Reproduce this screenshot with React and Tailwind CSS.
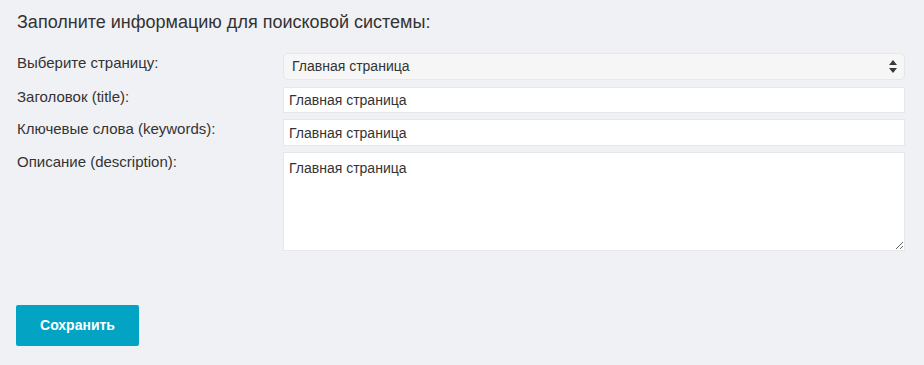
import { useState } from "react";

const PAGES = ["Главная страница", "О компании", "Контакты"];

const Row = ({ label, children }) => (
  <div className="grid grid-cols-[266px_622px] items-start">
    <label className="text-[15px] leading-[18px] text-[#333] pt-[1px]">{label}</label>
    {children}
  </div>
);

const App = () => {
  const [page, setPage] = useState(PAGES[0]);
  const [title, setTitle] = useState("Главная страница");
  const [keywords, setKeywords] = useState("Главная страница");
  const [description, setDescription] = useState("Главная страница");

  return (
    <div
      className="min-h-[365px] w-[924px] bg-[#f0f1f5] text-[#333] pl-[17px]"
      style={{ fontFamily: '"Liberation Sans", Arial, sans-serif' }}
    >
      <h2 className="pt-[12px] text-[18px] leading-[20px] font-normal text-[#333]">
        Заполните информацию для поисковой системы:
      </h2>

      <div className="mt-[21px] flex flex-col gap-[6px]">
        <Row label="Выберите страницу:">
          <div className="relative h-[27px] mb-[1px]">
            <select
              value={page}
              onChange={(e) => setPage(e.target.value)}
              className="appearance-none w-full h-full rounded-[5px] border border-[#e6e7ea] bg-[#f6f6f6] pl-[8px] text-[14px] text-[#333] outline-none"
            >
              {PAGES.map((p) => (
                <option key={p}>{p}</option>
              ))}
            </select>
            <svg
              className="pointer-events-none absolute right-[8px] top-[7px]"
              width="8"
              height="13"
              viewBox="0 0 8 13"
            >
              <path d="M4 0 L8 5 L0 5 Z" fill="#3a3a3a" />
              <path d="M4 13 L8 8 L0 8 Z" fill="#3a3a3a" />
            </svg>
          </div>
        </Row>

        <Row label="Заголовок (title):">
          <input
            value={title}
            onChange={(e) => setTitle(e.target.value)}
            className="h-[26px] w-full border border-[#e6e7ea] bg-white px-[5px] text-[14px] text-[#333] outline-none"
          />
        </Row>

        <Row label="Ключевые слова (keywords):">
          <input
            value={keywords}
            onChange={(e) => setKeywords(e.target.value)}
            className="h-[27px] w-full border border-[#e6e7ea] bg-white px-[5px] text-[14px] text-[#333] outline-none"
          />
        </Row>

        <Row label="Описание (description):">
          <textarea
            value={description}
            onChange={(e) => setDescription(e.target.value)}
            className="block h-[99px] w-full border border-[#e6e7ea] bg-white px-[5px] pt-[6px] text-[14px] leading-[18px] text-[#333] outline-none resize-y"
          />
        </Row>
      </div>

      <button className="mt-[54px] ml-[-1px] h-[41px] w-[123px] rounded-[2px] bg-[#02a3c3] text-[14px] font-bold text-white">
        Сохранить
      </button>
    </div>
  );
};

export default App;
